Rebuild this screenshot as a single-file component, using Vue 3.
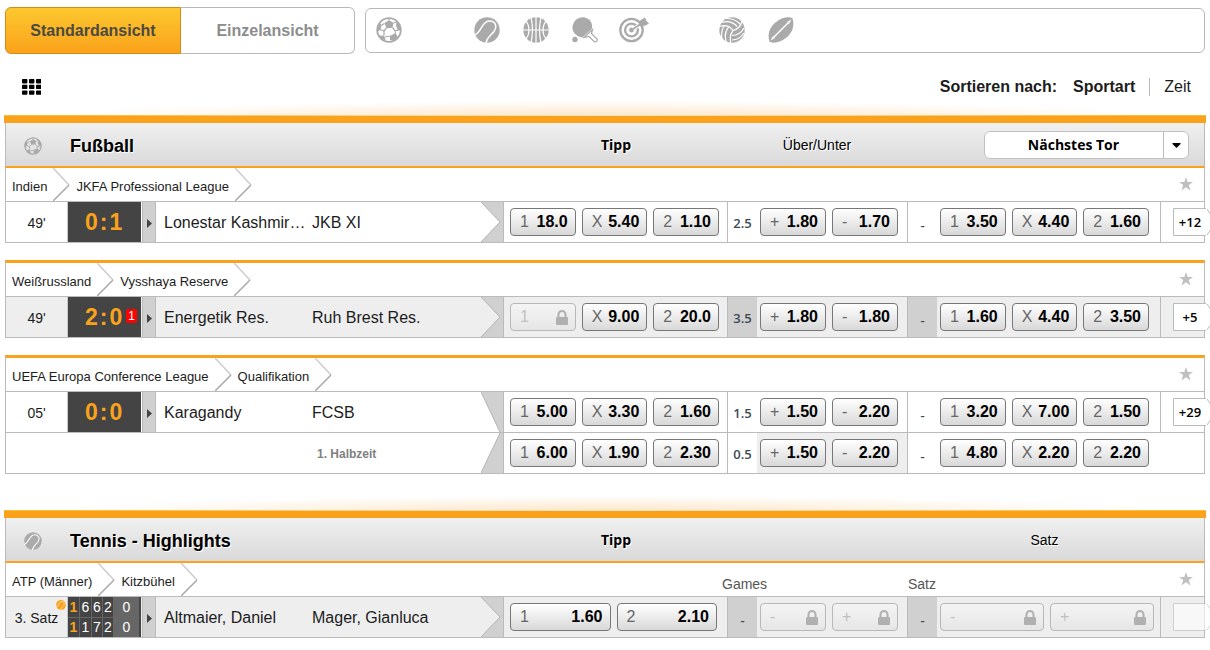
<script setup>
import { ref } from 'vue'

const view = ref('standard')
const sort = ref('sport')

const sports = [
  { id: 'football', label: 'Fußball' },
  null,
  { id: 'tennis', label: 'Tennis' },
  { id: 'basketball', label: 'Basketball' },
  { id: 'tabletennis', label: 'Tischtennis' },
  { id: 'darts', label: 'Darts' },
  null,
  { id: 'volleyball', label: 'Volleyball' },
  { id: 'rugby', label: 'Rugby' },
]

const odds = (keys, values) => keys.map((k, i) => ({ k, v: values[i] }))
const three = (...v) => odds(['1', 'X', '2'], v)
const overUnder = (...v) => odds(['+', '-'], v)

const sections = [
  {
    icon: 'football',
    title: 'Fußball',
    columns: ['Tipp', 'Über/Unter'],
    picker: 'Nächstes Tor',
    groups: [
      {
        crumbs: ['Indien', 'JKFA Professional League'],
        rows: [
          {
            time: "49'", score: ['0', '1'], home: 'Lonestar Kashmir…', away: 'JKB XI', arrow: 'full',
            tip: three('18.0', '5.40', '1.10'), line: '2.5', total: overUnder('1.80', '1.70'),
            next: three('3.50', '4.40', '1.60'), more: '+12',
          },
        ],
      },
      {
        crumbs: ['Weißrussland', 'Vysshaya Reserve'],
        rows: [
          {
            time: "49'", score: ['2', '0'], red: '1', home: 'Energetik Res.', away: 'Ruh Brest Res.', arrow: 'full', shaded: true,
            tip: three(null, '9.00', '20.0'), line: '3.5', total: overUnder('1.80', '1.80'),
            next: three('1.60', '4.40', '3.50'), more: '+5',
          },
        ],
      },
      {
        crumbs: ['UEFA Europa Conference League', 'Qualifikation'],
        rows: [
          {
            time: "05'", score: ['0', '0'], home: 'Karagandy', away: 'FCSB', arrow: 'top',
            tip: three('5.00', '3.30', '1.60'), line: '1.5', total: overUnder('1.50', '2.20'),
            next: three('3.20', '7.00', '1.50'), more: '+29',
          },
          {
            period: '1. Halbzeit', arrow: 'bottom',
            tip: three('6.00', '1.90', '2.30'), line: '0.5', total: overUnder('1.50', '2.20'),
            next: three('4.80', '2.20', '2.20'),
          },
        ],
      },
    ],
  },
  {
    icon: 'tennis',
    title: 'Tennis - Highlights',
    columns: ['Tipp', ''],
    heading: 'Satz',
    groups: [
      {
        crumbs: ['ATP (Männer)', 'Kitzbühel'],
        markets: ['Games', 'Satz'],
        rows: [
          {
            time: '3. Satz', sets: [['1', '6', '6', '2', '0'], ['1', '1', '7', '2', '0']],
            home: 'Altmaier, Daniel', away: 'Mager, Gianluca', arrow: 'full', shaded: true,
            tip: odds(['1', '2'], ['1.60', '2.10']), line: '-', total: odds(['-', '+'], [null, null]),
            next: odds(['-', '+'], [null, null]), more: '',
          },
        ],
      },
    ],
  },
]

const arrows = {
  full: { fill: 'M0 0 19 20 0 40H22V0Z', line: 'M0 0 19 20 0 40' },
  top: { fill: 'M0 0 19 40H22V0Z', line: 'M0 0 19 40' },
  bottom: { fill: 'M19 0 0 40H22V0Z', line: 'M19 0 0 40' },
}

const cellsOf = (row) => [
  { name: 'tip', list: row.tip },
  { name: 'total', line: row.line, list: row.total },
  { name: 'next', line: '-', list: row.next },
]
</script>

<template>
  <div class="page">
    <svg class="symbols" aria-hidden="true">
      <symbol id="football" viewBox="0 0 26 26">
        <circle cx="13" cy="13" r="11.8" fill="none" stroke="currentColor" stroke-width="1.8" />
        <path fill="currentColor" d="M8.5 6 13 3.200l4.500 2.500-1 5-6 .5ZM1 10l2.500-5L5.500 8.500 4.500 12.500l-3 2.500ZM20.500 4.500 23.500 8l1.500 5.500-3.300 0-1.700-5ZM3 18.500h5L10 24l-5-2.500ZM14 19l5.500-3 2.300 4-3.800 4-4-1Z" />
        <path fill="none" stroke="currentColor" stroke-width="1.200" d="M10.500 11 8 14v4.500M8 14l-4-1.500M16.500 10.500l2.500 3 .5 3M19 13.500h3M9 20l5.500-1M8.500 6.500 5 8.500M17.500 6l3-1M13 3.500V1" />
      </symbol>
      <symbol id="tennis" viewBox="0 0 26 26">
        <circle cx="13" cy="13" r="12.7" fill="currentColor" />
        <path fill="none" stroke="#fff" stroke-width="1.500" d="M0 18.500C8 15 7.500 4.500 15 4c6.500-.3 8.500 5.500 5 10.500-3 4-7.500 5.500-8 12" />
      </symbol>
      <symbol id="basketball" viewBox="0 0 26 26">
        <circle cx="13" cy="13" r="12.7" fill="currentColor" />
        <path fill="none" stroke="#fff" stroke-width="1.200" d="M0 13h26M13 0v26M8 0c2 9 2 17 0 26M18 0c-2 9-2 17 0 26M3 4c4 5 4 13 0 18M23 4c-4 5-4 13 0 18" />
      </symbol>
      <symbol id="tabletennis" viewBox="0 0 26 26">
        <path fill="currentColor" d="M20 11.500 10.500 20.500C4 19.500 0 15 .500 9.500 1.500 4 5.500.300 10.500.300c6.300 0 10.500 5 9.500 11.200Z" />
        <path fill="none" stroke="currentColor" stroke-width="1.200" d="M20.500 12.500 12 20.500l5-1 5.500 5.500q2.500 0 3-2.500l-6-6Z" />
        <circle cx="3" cy="22.500" r="2.700" fill="currentColor" />
      </symbol>
      <symbol id="darts" viewBox="0 0 30 26">
        <g fill="none" stroke="currentColor" stroke-width="2.300">
          <circle cx="12.500" cy="13" r="11.200" />
          <circle cx="12.500" cy="13" r="6.400" />
        </g>
        <circle cx="12.500" cy="13" r="2.400" fill="currentColor" />
        <path d="M14 12 26 4.500" stroke="#fff" stroke-width="3.500" />
        <path d="M12.500 13 24 5.500" stroke="currentColor" stroke-width="1.800" />
        <path fill="currentColor" d="m19 8.500 2-5L26 .500l1.500 3.500 2.500 2.500-3.500 2-5 1Z" />
      </symbol>
      <symbol id="volleyball" viewBox="0 0 26 26">
        <circle cx="13" cy="13" r="12.7" fill="currentColor" />
        <path fill="none" stroke="#fff" stroke-width="1.200" d="M0 9.500C6 7.500 11 9 14 13.500M2.500 5.500C9 3.500 14.500 5.500 18 9.500M7 1.500C13 1.500 18 3.500 21 7M14 13.500C19 12 22 9 23 4.500M14 13.500c-3 3.500-3.500 8-2 13M13 18.500c5 0 9.500-3 12-7.500M13 23c5 0 9-2.500 12-7M9.500 10C6 14.500 5.500 20 7.500 25.500M5 9C2.500 13 2 17 3 21.500" />
      </symbol>
      <symbol id="rugby" viewBox="0 0 26 26">
        <path fill="currentColor" d="M24.500 1.300C27 9 24 16 18.500 20.500 13 25 6 27 1.500 24.700-1 17 2 10 7.500 5.500 13 1 20-1 24.500 1.300Z" />
        <path fill="none" stroke="#fff" stroke-width="1.500" d="M20.500 5.500 5.500 20.500" />
        <path fill="#fff" d="m19 5 4.500-2.500-2.500 4.500ZM5 19 2.500 23.500 7 21Z" />
      </symbol>
      <symbol id="star" viewBox="0 0 14 14">
        <path fill="currentColor" d="m7 0 1.700 5H14L9.800 8.100l1.700 5.400L7 10.300l-4.500 3.200 1.700-5.400L0 5h5.300Z" />
      </symbol>
      <symbol id="lock" viewBox="0 0 12 15">
        <path fill="none" stroke="currentColor" stroke-width="2" d="M2.500 8V4.500a3.500 3.500 0 0 1 7 0V8" />
        <rect y="7" width="12" height="8" rx="1" fill="currentColor" />
      </symbol>
    </svg>

    <header class="toolbar">
      <div class="views">
        <button type="button" :class="{ active: view === 'standard' }" @click="view = 'standard'">Standardansicht</button>
        <button type="button" :class="{ active: view === 'single' }" @click="view = 'single'">Einzelansicht</button>
      </div>
      <nav class="sports" aria-label="Sportarten">
        <template v-for="(sport, i) in sports" :key="i">
          <button v-if="sport" type="button" :aria-label="sport.label">
            <svg :class="{ wide: sport.id === 'darts' }"><use :href="'#' + sport.id" /></svg>
          </button>
          <span v-else></span>
        </template>
      </nav>
    </header>

    <div class="options">
      <button class="grid-toggle" type="button" aria-label="Übersicht">
        <svg viewBox="0 0 19 16">
          <template v-for="y in 3" :key="y">
            <rect v-for="x in 3" :key="x" :x="(x - 1) * 7" :y="(y - 1) * 5.7" width="5.400" height="4.400" rx="0.8" />
          </template>
        </svg>
      </button>
      <div class="sorting">
        <b class="sort-label">Sortieren nach:</b>
        <button type="button" :class="{ active: sort === 'sport' }" @click="sort = 'sport'">Sportart</button>
        <button type="button" :class="{ active: sort === 'time' }" @click="sort = 'time'">Zeit</button>
      </div>
    </div>

    <section v-for="section in sections" :key="section.title" class="section">
      <div class="bar"></div>
      <div class="section-head">
        <svg class="section-icon"><use :href="'#' + section.icon" /></svg>
        <h2>{{ section.title }}</h2>
        <b class="col">{{ section.columns[0] }}</b>
        <span class="col">{{ section.columns[1] }}</span>
        <div v-if="section.picker" class="picker">
          <select aria-label="Wettmarkt">
            <option>{{ section.picker }}</option>
          </select>
          <svg viewBox="0 0 8 5"><path d="M0 0H8V1L4 5 0 1Z" /></svg>
        </div>
        <span v-else class="col last">{{ section.heading }}</span>
      </div>

      <article v-for="group in section.groups" :key="group.crumbs[0]" class="group">
        <div class="crumbs">
          <template v-for="crumb in group.crumbs" :key="crumb">
            <a href="#">{{ crumb }}</a>
            <svg class="chevron" viewBox="0 0 17 33">
              <path d="M0 0 16 17" stroke="#ccc" />
              <path d="M16 17 0 33" stroke="#a8a8a8" />
            </svg>
          </template>
          <div v-if="group.markets" class="markets">
            <span v-for="market in group.markets" :key="market">{{ market }}</span>
          </div>
          <button class="favourite" type="button" aria-label="Favorit"><svg><use href="#star" /></svg></button>
        </div>

        <div v-for="(row, r) in group.rows" :key="r" class="row" :class="{ shaded: row.shaded, sub: row.period }">
          <template v-if="!row.period">
            <div class="time">
              {{ row.time }}
              <svg v-if="row.sets" class="serve"><use href="#tennis" /></svg>
            </div>
            <div v-if="row.score" class="score">
              <span>{{ row.score[0] }}</span><span>:</span><span>{{ row.score[1] }}</span>
              <i v-if="row.red">{{ row.red }}</i>
            </div>
            <table v-else class="sets">
              <tbody>
                <tr v-for="(set, s) in row.sets" :key="s">
                  <td v-for="(n, c) in set" :key="c">{{ n }}</td>
                </tr>
              </tbody>
            </table>
            <button class="expand" type="button" aria-label="Details">
              <svg viewBox="0 0 5 9"><path d="M0 0 5 4.500 0 9Z" /></svg>
            </button>
          </template>
          <div class="names">
            <span class="home">{{ row.home }}</span>
            <span v-if="row.period" class="period">{{ row.period }}</span>
            <span v-else>{{ row.away }}</span>
            <svg class="row-arrow" viewBox="0 0 22 40" preserveAspectRatio="none">
              <path :d="arrows[row.arrow].fill" fill="#d0d0d0" />
              <path :d="arrows[row.arrow].line" fill="none" stroke="#b4b4b4" />
            </svg>
          </div>
          <div v-for="cell in cellsOf(row)" :key="cell.name" class="cell" :class="[cell.name, { pair: cell.list.length === 2 }]">
            <span v-if="cell.line" class="line" :class="{ dash: cell.line === '-' }">{{ cell.line }}</span>
            <div class="buttons">
              <button v-for="odd in cell.list" :key="odd.k" class="odd" type="button" :disabled="!odd.v">
                <span>{{ odd.k }}</span>
                <b v-if="odd.v">{{ odd.v }}</b>
                <svg v-else><use href="#lock" /></svg>
              </button>
            </div>
          </div>
          <div v-if="!row.period" class="more">
            <button type="button" :class="{ empty: !row.more }" :disabled="!row.more" aria-label="Weitere Wetten">
              <svg viewBox="0 0 44 28">
                <path d="M0 0H33L43 14 33 28H0Z" fill="#fff" />
                <path d="M33 .5H.5v27H33M34 1l9 13-9 13" fill="none" stroke="#bbb" />
              </svg>
              <span>{{ row.more }}</span>
            </button>
          </div>
          <div v-else></div>
        </div>
      </article>
    </section>
  </div>
</template>

<style>
body {
  background: #fff;
}
</style>

<style scoped>
.page {
  overflow-x: clip;
  padding: 7px 4px 12px;
  font-family: "Liberation Sans", Arial, sans-serif;
  font-size: 16px;
  color: #1c1c1c;
}
.page * {
  box-sizing: border-box;
}
.symbols {
  position: absolute;
  width: 0;
  height: 0;
}
button {
  font: inherit;
  color: inherit;
  background: none;
  border: 0;
  padding: 0;
  cursor: pointer;
}
svg {
  display: block;
}

.toolbar {
  display: flex;
  align-items: center;
  gap: 10px;
  padding: 0 1px;
}
.views {
  display: flex;
}
.views button {
  width: 175px;
  height: 47px;
  font-weight: bold;
  color: #8c8c8c;
  border: 1px solid #b8b8b8;
}
.views button:first-child {
  width: 176px;
  border-radius: 6px 0 0 6px;
}
.views button:last-child {
  border-left: 0;
  border-radius: 0 6px 6px 0;
  width: 174px;
}
.views .active {
  color: #4a4a44;
  background: linear-gradient(#fdc82f, #faa21b);
  border-color: #d58a17;
}
.sports {
  flex: 1;
  display: flex;
  gap: 24px;
  height: 45px;
  padding: 0 10px 2px;
  align-items: center;
  border: 1px solid #b8b8b8;
  border-radius: 6px;
  color: #aaa;
}
.sports > * {
  display: flex;
  justify-content: center;
  width: 25px;
}
.sports svg {
  flex: none;
  width: 26px;
  height: 26px;
}
.sports svg.wide {
  width: 30px;
}

.options {
  display: flex;
  justify-content: space-between;
  align-items: center;
  height: 61px;
  padding: 4px 15px 0 18px;
}
.grid-toggle svg {
  width: 19px;
  height: 16px;
}
.sorting {
  display: flex;
  align-items: center;
}
.sort-label {
  margin-right: 16px;
}
.sorting button + button {
  margin-left: 14px;
  padding-left: 14px;
  border-left: 1px solid #bbb;
}
.sorting .active {
  font-weight: bold;
}

.section + .section {
  margin-top: 36px;
}
.bar {
  position: relative;
  height: 8px;
  background: #faa21b;
  border-top: 1px solid #fdbb30;
}
.bar::before {
  content: "";
  position: absolute;
  left: 0;
  right: 0;
  bottom: 100%;
  height: 15px;
  background: radial-gradient(ellipse 46% 100% at 50% 100%, #fde6c8, transparent);
}
.section-head {
  display: grid;
  grid-template-columns: 64px 1fr 224px 180px 297px;
  align-items: center;
  height: 45px;
  margin: 0 1px;
  background: linear-gradient(#f0f0f0, #d9d9d9);
  border: solid #bbb;
  border-width: 0 1px;
  border-bottom: 2px solid #faa21b;
  color: #000;
  text-shadow: 1px 1px 0 #fff;
}
.section-icon {
  width: 18px;
  height: 18px;
  margin: 2px 0 0 18px;
  color: #aaa;
}
h2 {
  margin: 0;
  padding-top: 3px;
  font-size: 18px;
}
.col {
  font-size: 14px;
  text-align: center;
}
b.col {
  padding-left: 2px;
  font-family: "Open Sans", "Noto Sans", sans-serif;
}
.last {
  padding-right: 22px;
}
.picker {
  position: relative;
  justify-self: end;
  width: 205px;
  height: 28px;
  margin-right: 15px;
}
.picker select {
  appearance: none;
  width: 100%;
  height: 100%;
  padding: 0 26px 0 0;
  font: bold 14px "Open Sans", "Noto Sans", sans-serif;
  text-align-last: center;
  color: #000;
  background: linear-gradient(#bbb, #bbb) right 24px top / 1px 100% no-repeat, #fff;
  border: 1px solid #c0c0c0;
  border-radius: 6px;
}
.picker svg {
  position: absolute;
  right: 8px;
  top: 12px;
  width: 9px;
  height: 5px;
  pointer-events: none;
}

.group {
  margin: 0 1px;
  border: 1px solid #bbb;
  border-top: 0;
}
.group + .group {
  margin-top: 17px;
  border-top: 3px solid #faa21b;
}
.crumbs {
  display: flex;
  align-items: center;
  height: 33px;
  padding-left: 6px;
  font-size: 13px;
}
.crumbs a {
  padding-top: 4px;
  color: #1c1c1c;
  text-decoration: none;
}
.chevron {
  width: 17px;
  height: 33px;
  margin: 0 6px 0 6px;
  fill: none;
  stroke-width: 1.5;
}
.markets {
  display: flex;
  margin-left: auto;
  padding-top: 8px;
  font-size: 14px;
  color: #555;
}
.markets span:first-child {
  width: 186px;
}
.markets span:last-child {
  width: 271px;
}
.favourite {
  margin-left: auto;
  margin-right: 11px;
  padding-bottom: 2px;
  color: #c0c0c0;
}
.markets + .favourite {
  margin-left: 0;
}
.favourite svg {
  width: 14px;
  height: 14px;
}

.row {
  display: grid;
  grid-template-columns: 62px 73px 15px 1fr 224px 180px 253px 44px;
  min-height: 41px;
  border-top: 1px solid #bbb;
}
.row.sub {
  grid-template-columns: 1fr 224px 180px 253px 44px;
}
.shaded {
  background: #eee;
}
.time {
  position: relative;
  display: flex;
  align-items: center;
  justify-content: center;
  padding-top: 2px;
  font-size: 14px;
  border-right: 1px solid #c8c8c8;
}
.serve {
  position: absolute;
  right: 1px;
  top: 3px;
  width: 10px;
  height: 10px;
  color: #faa21b;
}
.score {
  position: relative;
  display: flex;
  align-items: center;
  gap: 2px;
  padding-left: 17px;
  font-size: 23px;
  font-weight: bold;
  color: #faa21b;
  background: #444;
}
.score i {
  position: absolute;
  right: 4px;
  top: 12px;
  width: 11px;
  height: 14px;
  font: 12px/14px "Liberation Sans", Arial, sans-serif;
  text-align: center;
  color: #fff;
  background: #f00;
  border-radius: 2px;
}
.sets {
  width: 73px;
  height: 40px;
  table-layout: fixed;
  border-collapse: separate;
  border-spacing: 0;
  color: #fff;
  font-size: 14px;
  background: #444;
}
.sets td {
  width: 12px;
  height: 20px;
  padding: 0;
  line-height: 19px;
  text-align: center;
  border-right: 1px solid #666;
}
.sets tr + tr td {
  border-top: 1px solid #666;
}
.sets td:first-child {
  font-weight: bold;
  color: #faa21b;
}
.sets td:last-child {
  width: 27px;
  background: #666;
  border-right: 2px solid #444;
}
.sets td:nth-child(3),
.sets td:nth-child(4) {
  width: 11px;
}
.expand {
  display: flex;
  align-items: center;
  justify-content: center;
  margin-left: 1px;
  padding-top: 2px;
  background: #d0d0d0;
  border: solid #bbb;
  border-width: 0 1px;
}
.expand svg {
  width: 5px;
  height: 9px;
  fill: #444;
}
.names {
  display: flex;
  align-items: center;
  min-width: 0;
  padding-left: 8px;
}
.names span {
  padding-top: 1px;
}
.home {
  flex: 0 0 148px;
  white-space: nowrap;
}
.sub .home {
  flex-basis: 303px;
}
.period {
  font-size: 12px;
  font-weight: bold;
  color: #808080;
}
.row-arrow {
  width: 22px;
  height: 100%;
  margin-left: auto;
}
.cell {
  display: flex;
  border-left: 1px solid #bbb;
}
.line {
  display: flex;
  flex: 0 0 29px;
  align-items: center;
  justify-content: center;
  padding-top: 2px;
  font: 600 13px "Open Sans", "Noto Sans", sans-serif;
  color: #3c4a54;
}
.line.dash {
  padding-top: 5px;
}
.shaded .line {
  background: #d0d0d0;
}
.buttons {
  flex: 1;
  display: flex;
  gap: 6px;
  padding: 6px 11px 6px 3px;
}
.tip .buttons {
  padding-left: 6px;
  padding-right: 8px;
}
.tip.pair .buttons {
  padding-right: 10px;
}
.total .buttons {
  padding-right: 9px;
}
.next.pair .buttons {
  padding-right: 6px;
}
.sub .total .buttons {
  background: #eee;
}
.odd {
  flex: 1;
  display: flex;
  align-items: center;
  justify-content: space-between;
  height: 28px;
  padding: 0 7px 0 9px;
  background: linear-gradient(#fff, #d8d8d8);
  border: 1px solid #777;
  border-radius: 4px;
}
.odd span {
  color: #666;
}
.odd b {
  color: #000;
}
.odd svg {
  width: 12px;
  height: 15px;
}
.odd:disabled {
  color: #b0b0b0;
  background: linear-gradient(#f4f4f4, #e6e6e6);
  border-color: #b8b8b8;
}
.odd:disabled span {
  color: #c0c0c0;
}
.more {
  padding: 6px 0 0 12px;
  border-left: 1px solid #bbb;
}
.more button {
  position: relative;
  width: 44px;
  height: 28px;
  padding-right: 10px;
  font: 600 13px "Open Sans", "Noto Sans", sans-serif;
  color: #000;
}
.more svg {
  position: absolute;
  left: 0;
  top: 0;
  width: 44px;
  height: 28px;
}
.more span {
  position: relative;
}
.more .empty {
  opacity: 0.6;
}
</style>
